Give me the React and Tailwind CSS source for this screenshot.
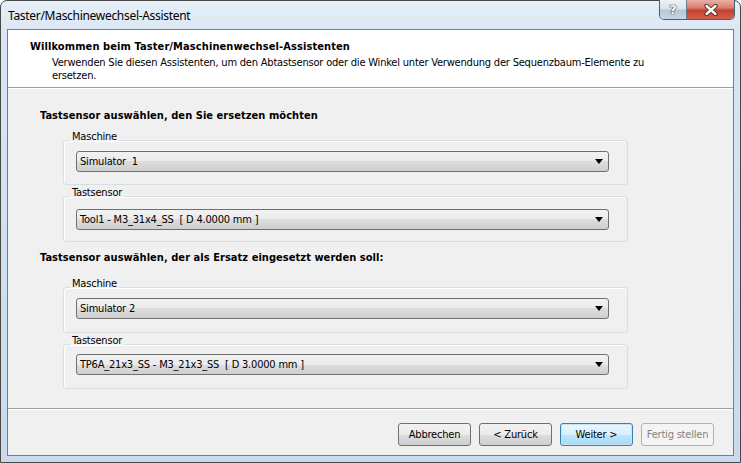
import React from "react";

const dlg = "font-['Tahoma','DejaVu_Sans_Condensed','Liberation_Sans',sans-serif] text-[11px] leading-[13px] tracking-[-0.2px] text-black";

function Combo({ value }) {
    return (
        <div className="flex items-center justify-between h-[21px] w-[533px] pl-[3px] pr-[5px] border border-[#707070] rounded-[3px] bg-[linear-gradient(to_bottom,#f2f2f2_0%,#ebebeb_50%,#dddddd_50%,#cfcfcf_100%)]">
            <span className="whitespace-pre">{value}</span>
            <svg width="8" height="5" viewBox="0 0 8 5">
                <polygon points="0,0 8,0 4,5" fill="#000" />
            </svg>
        </div>
    );
}

function Group({ label, value, className, comboClass = "mt-[1px]", padClass = "pb-[13px]" }) {
    return (
        <fieldset className={`ml-[55px] w-[565px] border border-[#d5dfe5] rounded-[3px] shadow-[inset_1px_1px_0_#fff] p-0 ${padClass} ${className}`}>
            <legend className="ml-[6px] px-[2px] pb-[7px] leading-[13px]">{label}</legend>
            <div className={`pl-[12px] ${comboClass}`}>
                <Combo value={value} />
            </div>
        </fieldset>
    );
}

function WizButton({ children, variant = "normal" }) {
    const styles = {
        normal: "border-[#707070] bg-[linear-gradient(to_bottom,#f2f2f2_0%,#ebebeb_50%,#dddddd_50%,#cfcfcf_100%)] text-black",
        focus: "border-[#3c7fb1] bg-[linear-gradient(to_bottom,#eaf6fd_0%,#d9f0fc_50%,#bee6fd_50%,#a7d9f5_100%)] shadow-[inset_0_0_0_1px_#c4e5f6] text-black",
        disabled: "border-[#adb2b5] bg-[#f4f4f4] text-[#838383]",
    };
    return (
        <button className={`w-[73px] h-[23px] border rounded-[3px] flex items-center justify-center ${styles[variant]}`}>
            {children}
        </button>
    );
}

export default function App() {
    return (
        <div className={`w-[741px] h-[463px] bg-white ${dlg}`}>
            <div className="relative w-full h-full flex flex-col border border-[#474747] rounded-t-[7px] bg-[linear-gradient(to_bottom,#e6eff8_0%,#d8e5f3_8%,#cadaec_100%)]">
                {/* title bar */}
                <div className="h-[28px] flex items-center pl-[7px] font-['Segoe_UI','Noto_Sans','Liberation_Sans',sans-serif] text-[12px] tracking-[-0.3px]">
                    Taster/Maschinewechsel-Assistent
                </div>

                {/* caption buttons */}
                <div className="absolute top-[-1px] left-[658px] flex h-[20px] border border-t-0 border-[#4d5d70] rounded-b-[5px] overflow-hidden">
                    <div className="w-[27px] flex items-center justify-center border-r border-[#6a7a8c] bg-[linear-gradient(to_bottom,#eef2f7_0%,#dbe3ec_45%,#b9c7d6_55%,#c9d5e2_100%)]">
                        <span className="text-white font-bold text-[13px] leading-none tracking-normal font-['DejaVu_Sans',sans-serif] [text-shadow:0_0_1px_#2a3848,0_0_1px_#2a3848,0_0_1px_#2a3848]">?</span>
                    </div>
                    <div className="w-[47px] flex items-center justify-center bg-[linear-gradient(to_bottom,#e8b0a6_0%,#d9806f_40%,#c4402f_55%,#d2604e_100%)]">
                        <svg width="14" height="12" viewBox="0 0 14 12">
                            <path d="M2.5 2 L11.5 10 M11.5 2 L2.5 10" stroke="#3b2a2a" strokeWidth="4.2" strokeLinecap="round" />
                            <path d="M2.5 2 L11.5 10 M11.5 2 L2.5 10" stroke="#fff" strokeWidth="2.4" strokeLinecap="round" />
                        </svg>
                    </div>
                </div>

                {/* client area */}
                <div className="flex-1 mx-[6px] mb-[6px] flex flex-col border border-[#6f7f90] bg-[#f0f0f0]">
                    <div className="h-[58px] bg-white border-b border-[#a0a0a0] pt-[10px]">
                        <div className="pl-[22px] font-bold tracking-[0.1px]">Willkommen beim Taster/Maschinenwechsel-Assistenten</div>
                        <div className="pl-[44px] mt-[3px] whitespace-nowrap">
                            Verwenden Sie diesen Assistenten, um den Abtastsensor oder die Winkel unter Verwendung der Sequenzbaum-Elemente zu
                            <br />
                            ersetzen.
                        </div>
                    </div>

                    <div className="flex-1 shadow-[inset_0_1px_0_#fff] pt-[21px]">
                        <div className="pl-[32px] font-bold tracking-[0.05px]">Tastsensor auswählen, den Sie ersetzen möchten</div>
                        <Group className="mt-[8px]" label="Maschine" value="Simulator  1" comboClass="mt-[1px]" padClass="pb-[12px]" />
                        <Group className="mt-[1px]" label="Tastsensor" value="Tool1 - M3_31x4_SS  [ D 4.0000 mm ]" comboClass="mt-[3px]" padClass="pb-[11px]" />

                        <div className="pl-[32px] mt-[9px] font-bold tracking-[0.05px]">Tastsensor auswählen, der als Ersatz eingesetzt werden soll:</div>
                        <Group className="mt-[13px]" label="Maschine" value="Simulator 2" />
                        <Group className="mt-[1px]" label="Tastsensor" value="TP6A_21x3_SS - M3_21x3_SS  [ D 3.0000 mm ]" comboClass="mt-0" />
                    </div>

                    <div className="h-[47px] border-t border-[#a0a0a0] shadow-[inset_0_1px_0_#fff] flex justify-end gap-[8px] pt-[14px] pr-[19px]">
                        <WizButton>Abbrechen</WizButton>
                        <WizButton>&lt; Zurück</WizButton>
                        <WizButton variant="focus">Weiter &gt;</WizButton>
                        <WizButton variant="disabled">Fertig stellen</WizButton>
                    </div>
                </div>
            </div>
        </div>
    );
}
